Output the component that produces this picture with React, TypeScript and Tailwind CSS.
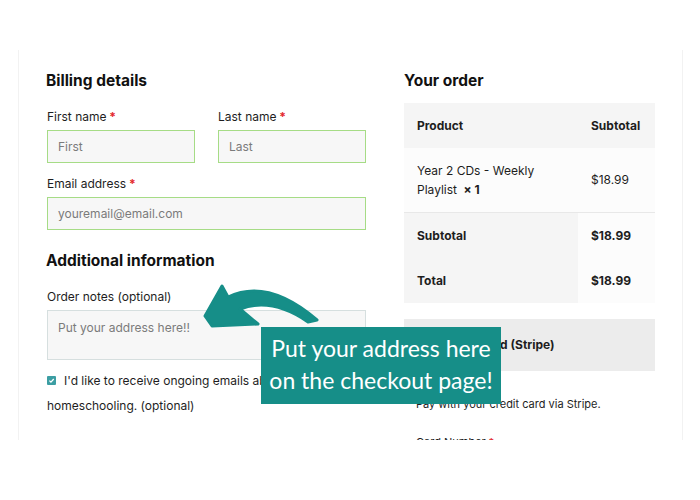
import React from "react";

const Req = () => <span className="text-[#e3262b] font-bold"> *</span>;

function Field({ label, placeholder, required, className = "" }: { label: string; placeholder: string; required?: boolean; className?: string }) {
    return (
        <div className={className}>
            <div className="text-[12px] leading-[18px] text-[#1e1e1e]">
                {label}{required && <Req />}
            </div>
            <div className="mt-[4px] h-[33px] border border-[#a6dc86] bg-[#f7f7f7] px-[10px] flex items-center text-[12px] text-[#7b7b7b]">
                {placeholder}
            </div>
        </div>
    );
}

function App() {
    return (
        <div className="relative w-[700px] h-[500px] bg-white overflow-hidden font-['Inter',sans-serif] text-[#1e1e1e]">
            <div className="ml-[18px] mt-[50px] w-[665px] h-[390px] border-l border-r border-[#f2f2f2] overflow-hidden flex pl-[27px] pt-[21px]">

                {/* billing */}
                <div className="w-[320px] shrink-0">
                    <h2 className="text-[15.5px] leading-[20px] font-bold text-[#111]">Billing details</h2>
                    <div className="mt-[17px] flex gap-[23px]">
                        <Field className="flex-1 ml-[1px]" label="First name" placeholder="First" required />
                        <Field className="flex-1" label="Last name" placeholder="Last" required />
                    </div>
                    <Field className="mt-[12px] ml-[1px]" label="Email address" placeholder="youremail@email.com" required />

                    <h2 className="mt-[21px] text-[15.5px] leading-[20px] font-bold text-[#111]">Additional information</h2>
                    <div className="mt-[17px] ml-[1px] text-[12px] leading-[18px]">Order notes (optional)</div>
                    <div className="mt-[4px] ml-[1px] h-[50px] border border-[#d6dfdf] bg-[#f7f7f7] px-[10px] pt-[8px] text-[12px] text-[#7b7b7b]">
                        Put your address here!!
                    </div>
                    <div className="mt-[8px] ml-[1px] text-[12px] leading-[25px]">
                        <span className="inline-flex align-middle mr-[8px] -mt-[3px] w-[9px] h-[9px] rounded-[1px] bg-[#3c9ea3] items-center justify-center">
                            <svg width="7" height="7" viewBox="0 0 10 10">
                                <path d="M2 5.2 L4.2 7.3 L8.2 2.8" fill="none" stroke="white" strokeWidth="1.8" />
                            </svg>
                        </span>
                        I'd like to receive ongoing emails about homeschooling. (optional)
                    </div>
                </div>

                {/* order */}
                <div className="ml-[38px] w-[251px] shrink-0">
                    <h2 className="text-[15.5px] leading-[20px] font-bold text-[#111]">Your order</h2>
                    <div className="mt-[12px] text-[12px]">
                        <div className="flex h-[45px] items-center bg-[#f5f5f5] font-bold">
                            <div className="w-[174px] pl-[13px]">Product</div>
                            <div className="pl-[13px]">Subtotal</div>
                        </div>
                        <div className="flex h-[65px] items-center bg-[#fcfcfc] border-b border-[#e8e8e8]">
                            <div className="w-[174px] pl-[13px] leading-[19px]">
                                Year 2 CDs - Weekly<br />Playlist <span className="ml-[3px] font-bold">× 1</span>
                            </div>
                            <div className="pl-[13px]">$18.99</div>
                        </div>
                        <div className="flex h-[45px] font-bold">
                            <div className="w-[174px] pl-[13px] bg-[#f5f5f5] flex items-center">Subtotal</div>
                            <div className="flex-1 pl-[13px] bg-[#fcfcfc] flex items-center">$18.99</div>
                        </div>
                        <div className="flex h-[45px] font-bold">
                            <div className="w-[174px] pl-[13px] bg-[#f5f5f5] flex items-center">Total</div>
                            <div className="flex-1 pl-[13px] bg-[#fcfcfc] flex items-center">$18.99</div>
                        </div>
                    </div>
                    <div className="mt-[16px] h-[52px] bg-[#ececec] flex items-center pl-[13px] gap-[8px] text-[12px] font-bold">
                        <span className="w-[12px] h-[12px] rounded-full border border-[#999] bg-white" />
                        <span className="ml-[4px]">Credit Card (Stripe)</span>
                    </div>
                    <div className="mt-[24px] pl-[12px] text-[11px] leading-[18px]">Pay with your credit card via Stripe.</div>
                    <div className="mt-[20px] pl-[12px] text-[11px] leading-[18px]">Card Number<Req /></div>
                </div>
            </div>

            {/* annotation */}
            <svg className="absolute left-0 top-0" width="700" height="500">
                <path
                    d="M205 316 L222 286 L228 297 Q268 278 317 320 L308 322 Q272 297 240 309 L258 324 L212 326 Z"
                    fill="#168e88"
                    stroke="#168e88"
                    strokeWidth="3"
                    strokeLinejoin="round"
                />
            </svg>
            <div className="absolute left-[261px] top-[327px] w-[240px] h-[77px] pb-[4px] bg-[#168e88] flex flex-col items-center justify-center text-white font-['Lato',sans-serif] text-[23px] leading-[32px]">
                <div>Put your address here</div>
                <div>on the checkout page!</div>
            </div>
        </div>
    );
}

export default App;
